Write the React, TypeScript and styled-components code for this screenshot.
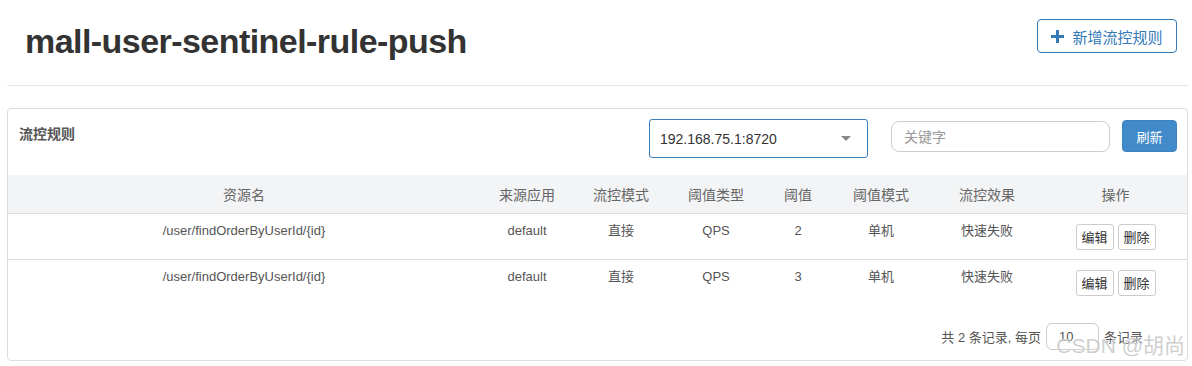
import React, { useState } from 'react';
import styled, { createGlobalStyle } from 'styled-components';

const rules = [
  { resource: '/user/findOrderByUserId/{id}', app: 'default', mode: '直接', grade: 'QPS', count: 2, cluster: '单机', effect: '快速失败' },
  { resource: '/user/findOrderByUserId/{id}', app: 'default', mode: '直接', grade: 'QPS', count: 3, cluster: '单机', effect: '快速失败' },
];

const columns = [
  { title: '资源名', width: 472 },
  { title: '来源应用', width: 94 },
  { title: '流控模式', width: 94 },
  { title: '阈值类型', width: 96 },
  { title: '阈值', width: 68 },
  { title: '阈值模式', width: 98 },
  { title: '流控效果', width: 114 },
  { title: '操作', width: 143 },
];

const App = () => {
  const [keyword, setKeyword] = useState('');
  const [pageSize, setPageSize] = useState('10');
  return (
    <Page>
      <GlobalStyle />
      <Header>
        <Title>mall-user-sentinel-rule-push</Title>
        <AddButton>
          <svg width='13' height='13' viewBox='0 0 13 13'>
            <path d='M5 0h3v5h5v3H8v5H5V8H0V5h5z' fill='#337ab7' />
          </svg>
          新增流控规则
        </AddButton>
      </Header>
      <Panel>
        <Toolbar>
          <PanelTitle>流控规则</PanelTitle>
          <Select>
            <span>192.168.75.1:8720</span>
            <Caret />
          </Select>
          <Search
            placeholder='关键字'
            value={keyword}
            onChange={(e: React.ChangeEvent<HTMLInputElement>) => setKeyword(e.target.value)}
          />
          <Refresh>刷新</Refresh>
        </Toolbar>
        <Table>
          <colgroup>
            {columns.map((c) => (
              <col key={c.title} style={{ width: c.width }} />
            ))}
          </colgroup>
          <thead>
            <tr>
              {columns.map((c) => (
                <Th key={c.title}>{c.title}</Th>
              ))}
            </tr>
          </thead>
          <tbody>
            {rules.map((r, i) => (
              <Row key={i} $last={i === rules.length - 1}>
                <Td>{r.resource}</Td>
                <Td>{r.app}</Td>
                <Td>{r.mode}</Td>
                <Td>{r.grade}</Td>
                <Td>{r.count}</Td>
                <Td>{r.cluster}</Td>
                <Td>{r.effect}</Td>
                <Td>
                  <Ops>
                    <SmallButton>编辑</SmallButton>
                    <SmallButton>删除</SmallButton>
                  </Ops>
                </Td>
              </Row>
            ))}
          </tbody>
        </Table>
        <Footer>
          <span>共 2 条记录, 每页</span>
          <PageSize
            value={pageSize}
            onChange={(e: React.ChangeEvent<HTMLInputElement>) => setPageSize(e.target.value)}
          />
          <span>条记录</span>
        </Footer>
        <Watermark>CSDN @胡尚</Watermark>
      </Panel>
    </Page>
  );
};

export default App;

const GlobalStyle = createGlobalStyle`
  html, body {
    margin: 0;
    padding: 0;
    background: #fff;
  }
  body {
    font-family: "Liberation Sans", "Noto Sans CJK SC", sans-serif;
    color: #333;
  }
  * {
    box-sizing: border-box;
  }
`;

const Page = styled.div`
  width: 1192px;
  padding: 0 4px 0 7px;
`;

const Header = styled.header`
  display: flex;
  justify-content: space-between;
  align-items: flex-start;
  height: 86px;
  border-bottom: 1px solid #e5e5e5;
`;

const Title = styled.h1`
  margin: 23px 0 0 18px;
  font-size: 34px;
  line-height: 1.1;
  font-weight: 700;
  letter-spacing: -0.55px;
  color: #333;
`;

const AddButton = styled.button`
  margin: 19px 11px 0 0;
  width: 140px;
  height: 34px;
  display: flex;
  align-items: center;
  justify-content: center;
  gap: 8px;
  background: #fff;
  border: 1px solid #337ab7;
  border-radius: 4px;
  color: #337ab7;
  font-family: inherit;
  font-size: 15px;
  padding: 0;
`;

const Panel = styled.section`
  position: relative;
  margin-top: 22px;
  border: 1px solid #ddd;
  border-radius: 4px;
  background: #fff;
`;

const Toolbar = styled.div`
  height: 66px;
  display: flex;
  align-items: flex-start;
  padding: 10px 10px 0 11px;
`;

const PanelTitle = styled.h3`
  margin: 5px auto 0 0;
  font-size: 14px;
  line-height: 20px;
  font-weight: 700;
  color: #555;
`;

const Select = styled.div`
  width: 219px;
  height: 39px;
  border: 1px solid #3c7fbd;
  border-radius: 3px;
  display: flex;
  align-items: center;
  justify-content: space-between;
  padding: 0 16px 0 10px;
  font-size: 14px;
  color: #333;
`;

const Caret = styled.span`
  width: 0;
  height: 0;
  border-left: 5px solid transparent;
  border-right: 5px solid transparent;
  border-top: 5px solid #888;
`;

const Search = styled.input`
  margin: 2px 0 0 23px;
  width: 219px;
  height: 31px;
  border: 1px solid #ccc;
  border-radius: 8px;
  padding: 0 12px;
  font-family: inherit;
  font-size: 14px;
  color: #555;
  outline: none;
  &::placeholder {
    color: #999;
  }
`;

const Refresh = styled.button`
  margin: 1px 0 0 12px;
  width: 55px;
  height: 32px;
  background: #428bca;
  border: 1px solid #3f84c0;
  border-radius: 4px;
  color: #fff;
  font-family: inherit;
  font-size: 13px;
  padding: 0;
`;

const Table = styled.table`
  width: 100%;
  table-layout: fixed;
  border-collapse: collapse;
`;

const Th = styled.th`
  height: 38px;
  background: #f3f4f5;
  border-bottom: 1px solid #ddd;
  font-size: 14px;
  font-weight: 400;
  color: #666;
  text-align: center;
  vertical-align: middle;
  padding: 0;
`;

const Row = styled.tr<{ $last: boolean }>`
  td {
    border-bottom: ${(p) => (p.$last ? 'none' : '1px solid #ddd')};
  }
`;

const Td = styled.td`
  height: 46px;
  padding: 8px 0 0;
  vertical-align: top;
  text-align: center;
  font-size: 13px;
  line-height: 18px;
  color: #555;
`;

const Ops = styled.div`
  display: flex;
  justify-content: center;
  gap: 4px;
  margin-top: 2px;
`;

const SmallButton = styled.button`
  width: 38px;
  height: 26px;
  padding: 0;
  background: #fff;
  border: 1px solid #ccc;
  border-radius: 3px;
  font-family: inherit;
  font-size: 13px;
  color: #333;
`;

const Footer = styled.div`
  display: flex;
  justify-content: flex-end;
  align-items: center;
  gap: 5px;
  padding: 18px 44px 10px 0;
  font-size: 13px;
  color: #555;
`;

const PageSize = styled.input`
  width: 53px;
  height: 27px;
  border: 1px solid #ccc;
  border-radius: 6px;
  padding: 0 12px;
  font-family: inherit;
  font-size: 13px;
  color: #555;
  outline: none;
`;

const Watermark = styled.span`
  position: absolute;
  right: 2px;
  bottom: 1px;
  font-size: 21px;
  color: rgba(190, 190, 190, 0.75);
  text-shadow: 0 0 2px #fff;
  pointer-events: none;
`;
